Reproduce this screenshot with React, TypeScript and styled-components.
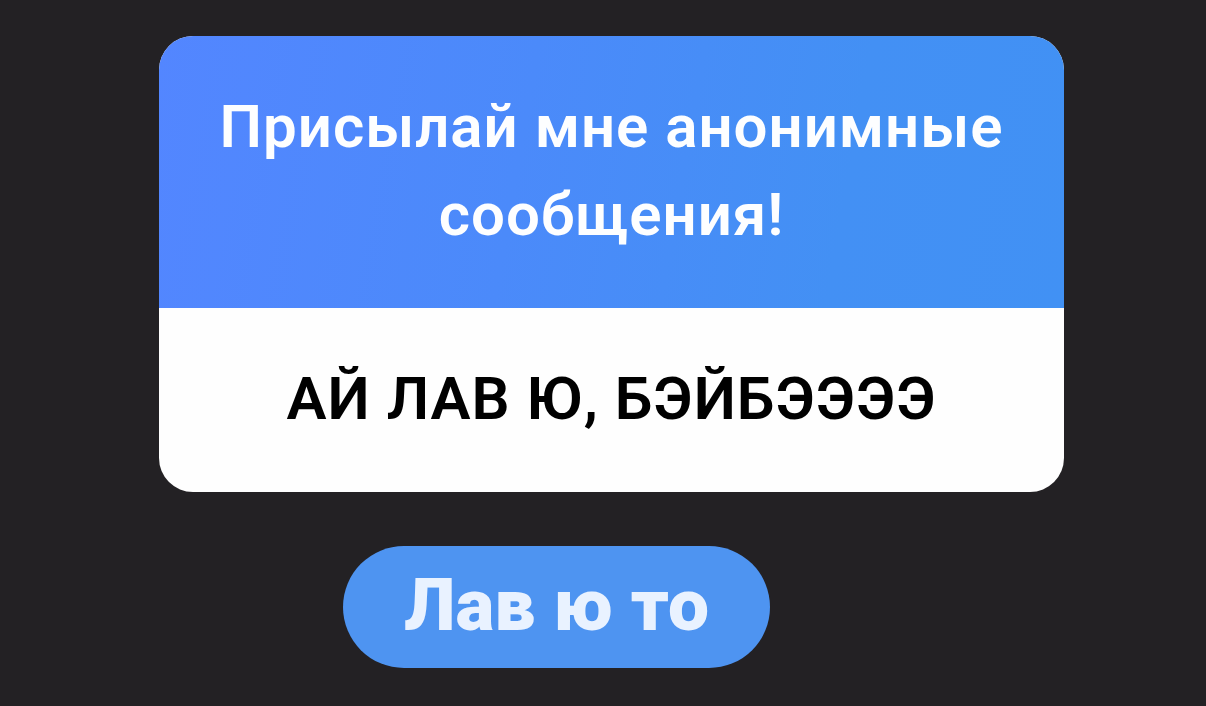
import React from "react";
import styled, { createGlobalStyle } from "styled-components";

const GlobalStyle = createGlobalStyle`
  * { box-sizing: border-box; }
  body {
    margin: 0;
    background: #232124;
    font-family: Roboto, "Noto Sans", sans-serif;
  }
`;

const Page = styled.main`
  min-height: 100vh;
  padding: 36px 142px 36px 159px;
  display: flex;
  flex-direction: column;
  align-items: center;
  gap: 54px;
`;

const Card = styled.article`
  width: 100%;
  border-radius: 34px;
  overflow: hidden;
  background: #fefefe;
  text-align: center;
  font-size: 60px;
  line-height: 88px;
  letter-spacing: 1px;
`;

const Prompt = styled.h1`
  margin: 0;
  padding: 47px 56px 49px;
  background: linear-gradient(100deg, #5386ff 0%, #4b8afa 40%, #4390f4 75%, #4191f4 100%);
  color: #fdfeff;
  font-size: inherit;
  font-weight: 600;
`;

const Message = styled.p`
  margin: 0;
  padding: 47px 56px 49px;
  color: #000;
  font-weight: 600;
`;

const Reply = styled.p`
  margin: 0 110px 0 0;
  padding: 14px 61px 18px;
  border-radius: 61px;
  background: #4e94f1;
  color: #e9f2ff;
  font-size: 73px;
  font-weight: 900;
  line-height: 90px;
  white-space: nowrap;
`;

export default function App() {
  return (
    <>
      <GlobalStyle />
      <Page>
        <Card>
          <Prompt>Присылай мне анонимные сообщения!</Prompt>
          <Message>АЙ ЛАВ Ю, БЭЙБЭЭЭЭ</Message>
        </Card>
        <Reply>Лав ю то</Reply>
      </Page>
    </>
  );
}
